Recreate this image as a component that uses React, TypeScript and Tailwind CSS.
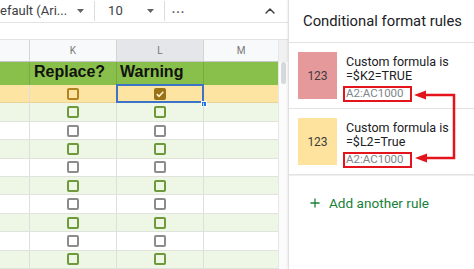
import React from "react";
import { ChevronUp, Plus } from "lucide-react";

type Kind = "head" | "yellow" | "green" | "white";

const rowKinds: Kind[] = [
  "yellow",
  "green",
  "white",
  "green",
  "white",
  "green",
  "white",
  "green",
  "white",
  "green",
];

function Caret() {
  return (
    <svg width="7" height="4" viewBox="0 0 7 4" className="shrink-0">
      <path d="M0 0 L7 0 L3.5 4 Z" fill="#5f6368" />
    </svg>
  );
}

function Checkbox({ kind, checked }: { kind: Kind; checked?: boolean }) {
  if (checked) {
    return (
      <div className="w-[12px] h-[12px] rounded-[2px] bg-[#9a7216] flex items-center justify-center">
        <svg width="10" height="10" viewBox="0 0 10 10">
          <path d="M1.8 5.2 L4 7.3 L8.3 2.8" stroke="#fff3d0" strokeWidth="1.6" fill="none" />
        </svg>
      </div>
    );
  }
  const border =
    kind === "yellow"
      ? "border-[#b08420]"
      : kind === "green"
      ? "border-[#6f9a3c]"
      : "border-[#8c8c8c]";
  return <div className={`w-[12px] h-[12px] rounded-[2px] border-2 ${border}`} />;
}

function DataRow({ kind, index }: { kind: Kind; index: number }) {
  const bg =
    kind === "yellow" ? "bg-[#fee4a3]" : kind === "green" ? "bg-[#eef6e6]" : "bg-white";
  const line = kind === "yellow" ? "border-[#e9d49a]" : "border-[#dfe3dc]";
  const h = index === 0 ? "h-[18px]" : "h-[18.4px]";
  return (
    <div className={`flex ${h} ${bg} border-b ${line} box-border`}>
      <div className="w-[30px] border-r border-[#dcdfdc]" />
      <div className="w-[87px] border-r border-[#dcdfdc] flex items-center justify-center">
        <Checkbox kind={kind} />
      </div>
      <div className="relative w-[87px] border-r border-[#dcdfdc] flex items-center justify-center">
        <Checkbox kind={kind} checked={index === 0} />
        {index === 0 && (
          <>
            <div className="absolute left-[-1px] right-[-1px] top-[-1px] bottom-[-1px] border-2 border-[#3b73c9]" />
            <div className="absolute right-[-4px] bottom-[-5px] w-[6px] h-[6px] bg-[#1a73e8] border border-white" />
          </>
        )}
      </div>
      <div className="w-[74px]" />
    </div>
  );
}

function Grid() {
  return (
    <div className="w-[288px] shrink-0 flex flex-col overflow-hidden">
      {/* toolbar */}
      <div
        className="h-[27px] flex items-center border-b border-[#e3e3e3] text-[13px] text-[#3c4043] whitespace-nowrap overflow-hidden"
        style={{ fontFamily: "Roboto, 'Liberation Sans', sans-serif" }}
      >
        <span>efault (Ari...</span>
        <span className="ml-[10px]">
          <Caret />
        </span>
        <div className="ml-[10px] w-px h-[20px] bg-[#dadce0]" />
        <span className="ml-[13px]">10</span>
        <span className="ml-[24px]">
          <Caret />
        </span>
        <div className="ml-[10px] w-px h-[20px] bg-[#dadce0]" />
        <span className="ml-[7px] tracking-[1px] text-[12px] font-bold -mt-[4px] text-[#5f6368]">...</span>
        <div className="flex-1" />
        <ChevronUp size={16} strokeWidth={2.2} className="mr-[10px] text-[#3c4043]" />
      </div>
      {/* formula bar */}
      <div className="h-[20px] border-b border-[#e3e3e3] bg-white" />
      <div className="flex">
        <div className="w-[278px] flex flex-col">
          {/* column header */}
          <div
            className="flex h-[22px] bg-[#f8f9fa] border-b border-[#c7c7c7] text-[10px] text-[#777]"
            style={{ fontFamily: "Roboto, 'Liberation Sans', sans-serif" }}
          >
            <div className="w-[30px] border-r border-[#d5d5d5]" />
            <div className="w-[87px] border-r border-[#d5d5d5] flex items-center justify-center">K</div>
            <div className="w-[87px] border-r border-[#d5d5d5] bg-[#e4e6e9] flex items-center justify-center">
              L
            </div>
            <div className="w-[74px] flex items-center justify-center">M</div>
          </div>
          {/* green header row */}
          <div
            className="flex h-[23px] bg-[#88c04b] text-[16px] font-bold text-[#111] box-border"
            style={{ fontFamily: "'Liberation Sans', Arial, sans-serif" }}
          >
            <div className="w-[30px] border-r border-[#7aa944]" />
            <div className="w-[87px] border-r border-[#7aa944] flex items-end pb-[1px] pl-[4px]">Replace?</div>
            <div className="w-[87px] border-r border-[#7aa944] flex items-end pb-[1px] pl-[3px]">Warning</div>
            <div className="w-[74px]" />
          </div>
          {rowKinds.map((k, i) => (
            <DataRow key={i} kind={k} index={i} />
          ))}
        </div>
        <div className="w-[10px] border-l border-[#e6e6e6] bg-[#fbfbfb] flex flex-col">
          <div className="h-[22px] bg-[#f1f1f1]" />
          <div className="ml-[2px] w-[5px] h-[22px] rounded-full bg-[#d6d8db]" />
        </div>
      </div>
    </div>
  );
}

function Rule({ color, formula }: { color: string; formula: string }) {
  return (
    <div className="flex h-[66px] pl-[9px] pt-[9px] border-b border-[#e3e3e3]">
      <div
        className={`w-[39px] h-[47px] ${color} flex items-center justify-center text-[12px] text-[#3c3c3c]`}
      >
        123
      </div>
      <div className="ml-[9px] flex flex-col text-[12.5px] leading-[14px] text-[#202124] pt-[3px]">
        <span>Custom formula is</span>
        <span>{formula}</span>
        <span className="mt-[3px] -ml-[3px] self-start border-2 border-[#e3141b] px-[1px] h-[12px] box-content w-[63px] text-[11.5px] leading-[11px] text-[#80868b]">
          A2:AC1000
        </span>
      </div>
    </div>
  );
}

function Panel() {
  return (
    <div
      className="relative flex-1 border-l border-[#e0e0e0] bg-white shadow-[-1px_0_2px_rgba(0,0,0,0.06)]"
      style={{ fontFamily: "Roboto, 'Liberation Sans', sans-serif" }}
    >
      <div className="h-[43px] border-b border-[#e3e3e3] flex items-center pl-[14px] text-[14.8px] text-[#202124]">
        Conditional format rules
      </div>
      <Rule color="bg-[#e6999b]" formula="=$K2=TRUE" />
      <Rule color="bg-[#fde39e]" formula="=$L2=True" />
      <div className="h-[1px] bg-[#eeeeee]" />
      <div className="flex items-center pl-[19px] pt-[17px] text-[13.6px] text-[#188038]">
        <Plus size={14} strokeWidth={2.2} />
        <span className="ml-[7px]">Add another rule</span>
      </div>
      <svg
        className="absolute left-0 top-0 pointer-events-none"
        width="186"
        height="269"
        viewBox="288 0 186 269"
      >
        <polyline
          points="423,95 453,95 453,158 423,158"
          fill="none"
          stroke="#e3141b"
          strokeWidth="2.5"
        />
        <path d="M413 95 L425 90.5 L425 99.5 Z" fill="#e3141b" />
        <path d="M414 158 L426 153.5 L426 162.5 Z" fill="#e3141b" />
      </svg>
    </div>
  );
}

export default function App() {
  return (
    <div className="w-[474px] h-[269px] overflow-hidden flex bg-white">
      <Grid />
      <Panel />
    </div>
  );
}
